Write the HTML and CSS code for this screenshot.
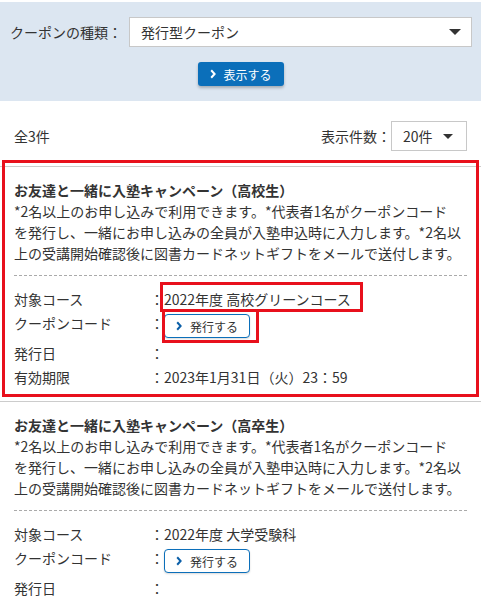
FILE: index.html
```html
<!DOCTYPE html>
<html lang="ja">
<head>
<meta charset="utf-8">
<title>クーポン</title>
<link rel="stylesheet" href="styles.css">
</head>
<body>
<div class="page">
  <div class="search">
    <div class="search-row">
      <span class="search-label">クーポンの種類：</span>
      <div class="select select-wide"><span>発行型クーポン</span><span class="caret"></span></div>
    </div>
    <div class="search-actions">
      <button class="btn-primary" type="button"><svg class="chev" width="6" height="10" viewBox="0 0 6 10"><path d="M1.2 1.3 L4.6 5 L1.2 8.7" fill="none" stroke="#fff" stroke-width="2"/></svg><span>表示する</span></button>
    </div>
  </div>

  <div class="count-bar">
    <span class="count">全3件</span>
    <div class="per-page">
      <span>表示件数：</span>
      <div class="select select-small"><span>20件</span><span class="caret caret-small"></span></div>
    </div>
  </div>

  <ul class="coupon-list">
    <li class="coupon">
      <p class="coupon-title">お友達と一緒に入塾キャンペーン（高校生）</p>
      <p class="coupon-desc">*2名以上のお申し込みで利用できます。*代表者1名がクーポンコード<br>を発行し、一緒にお申し込みの全員が入塾申込時に入力します。*2名以<br>上の受講開始確認後に図書カードネットギフトをメールで送付します。</p>
      <div class="coupon-info">
        <div class="info-row"><span class="info-label">対象コース</span><span class="info-sep">：</span><span class="info-value">2022年度 高校グリーンコース</span></div>
        <div class="info-row"><span class="info-label">クーポンコード</span><span class="info-sep">：</span><button class="btn-issue" type="button"><svg class="chev" width="6" height="10" viewBox="0 0 6 10"><path d="M1.2 1.3 L4.6 5 L1.2 8.7" fill="none" stroke="#0b5fa8" stroke-width="2"/></svg><span>発行する</span></button></div>
        <div class="info-row"><span class="info-label">発行日</span><span class="info-sep">：</span><span class="info-value"></span></div>
        <div class="info-row"><span class="info-label">有効期限</span><span class="info-sep">：</span><span class="info-value">2023年1月31日（火）23：59</span></div>
      </div>
    </li>
    <li class="coupon">
      <p class="coupon-title">お友達と一緒に入塾キャンペーン（高卒生）</p>
      <p class="coupon-desc">*2名以上のお申し込みで利用できます。*代表者1名がクーポンコード<br>を発行し、一緒にお申し込みの全員が入塾申込時に入力します。*2名以<br>上の受講開始確認後に図書カードネットギフトをメールで送付します。</p>
      <div class="coupon-info">
        <div class="info-row"><span class="info-label">対象コース</span><span class="info-sep">：</span><span class="info-value">2022年度 大学受験科</span></div>
        <div class="info-row"><span class="info-label">クーポンコード</span><span class="info-sep">：</span><button class="btn-issue" type="button"><svg class="chev" width="6" height="10" viewBox="0 0 6 10"><path d="M1.2 1.3 L4.6 5 L1.2 8.7" fill="none" stroke="#0b5fa8" stroke-width="2"/></svg><span>発行する</span></button></div>
        <div class="info-row"><span class="info-label">発行日</span><span class="info-sep">：</span><span class="info-value"></span></div>
        <div class="info-row"><span class="info-label">有効期限</span><span class="info-sep">：</span><span class="info-value">2023年1月31日（火）23：59</span></div>
      </div>
    </li>
  </ul>

  <div class="mark mark-card"></div>
  <div class="mark mark-course"></div>
  <div class="mark mark-button"></div>
</div>
</body>
</html>
```

FILE: styles.css
```css
html, body {
  margin: 0;
  height: 600px;
  overflow: hidden;
}
body {
  font-family: "Noto Sans CJK JP", "Noto Sans", sans-serif;
  font-size: 14px;
  color: #333;
  background: #fff;
}
.page {
  position: relative;
  padding-top: 2px;
}

/* search band */
.search {
  background: #dce6f1;
  padding: 15px 9px 15px 10px;
}
.search-row {
  display: flex;
  align-items: center;
  gap: 7px;
}
.search-label {
  line-height: 30px;
  white-space: nowrap;
}
.select {
  display: flex;
  align-items: center;
  justify-content: space-between;
  height: 30px;
  box-sizing: border-box;
  border: 1px solid #c8c8c8;
  background: #fff;
  padding: 0 10px 0 11px;
}
.select-wide {
  flex: 1;
}
.caret {
  width: 0;
  height: 0;
  border-left: 6px solid transparent;
  border-right: 6px solid transparent;
  border-top: 6px solid #333;
}
.caret-small {
  border-left-width: 5px;
  border-right-width: 5px;
  border-top-width: 5px;
}
.search-actions {
  display: flex;
  justify-content: center;
  margin-top: 15px;
}
.btn-primary {
  display: flex;
  align-items: center;
  justify-content: center;
  gap: 7px;
  width: 86px;
  height: 24px;
  padding: 0 0 0 0;
  border: 0;
  border-radius: 3px;
  background: #0b6fba;
  color: #fff;
  font-family: inherit;
  font-size: 12px;
  box-shadow: 0 2px 3px rgba(0, 0, 0, 0.25);
}
.chev {
  display: block;
  flex-shrink: 0;
}

/* count bar */
.count-bar {
  display: flex;
  justify-content: space-between;
  align-items: center;
  margin: 20px 14px 15px 14px;
}
.per-page {
  display: flex;
  align-items: center;
}
.select-small {
  width: 76px;
  padding: 0 13px 0 11px;
}

/* list */
.coupon-list {
  list-style: none;
  margin: 0;
  padding: 0;
  border-top: 1px solid #ccc;
}
.coupon {
  border-bottom: 1px solid #ccc;
  padding: 13px 14px 12px;
}
.coupon-title {
  margin: 0;
  font-weight: bold;
  line-height: 21px;
}
.coupon-desc {
  margin: 0 0 11px;
  line-height: 21px;
  white-space: nowrap;
}
.coupon-info {
  border-top: 1px dashed #aaa;
  padding-top: 11px;
}
.info-row {
  display: flex;
  align-items: flex-start;
  line-height: 24px;
}
.info-label {
  width: 136px;
  flex-shrink: 0;
}
.info-sep {
  width: 14px;
  flex-shrink: 0;
}
.btn-issue {
  display: flex;
  align-items: center;
  justify-content: center;
  gap: 8px;
  width: 86px;
  height: 24px;
  margin: 3px 0;
  padding: 0;
  border: 1px solid #0b6fba;
  border-radius: 4px;
  background: #fff;
  color: #333;
  font-family: inherit;
  font-size: 12px;
  box-shadow: 0 1px 2px rgba(0, 0, 0, 0.15);
}

/* annotation marks */
.mark {
  position: absolute;
  box-sizing: border-box;
  border: 3px solid #e8101c;
  pointer-events: none;
}
.mark-card {
  left: 2px;
  top: 160px;
  width: 477px;
  height: 237px;
}
.mark-course {
  left: 160px;
  top: 282px;
  width: 203px;
  height: 30px;
}
.mark-button {
  left: 162px;
  top: 309px;
  width: 97px;
  height: 34px;
}
```
